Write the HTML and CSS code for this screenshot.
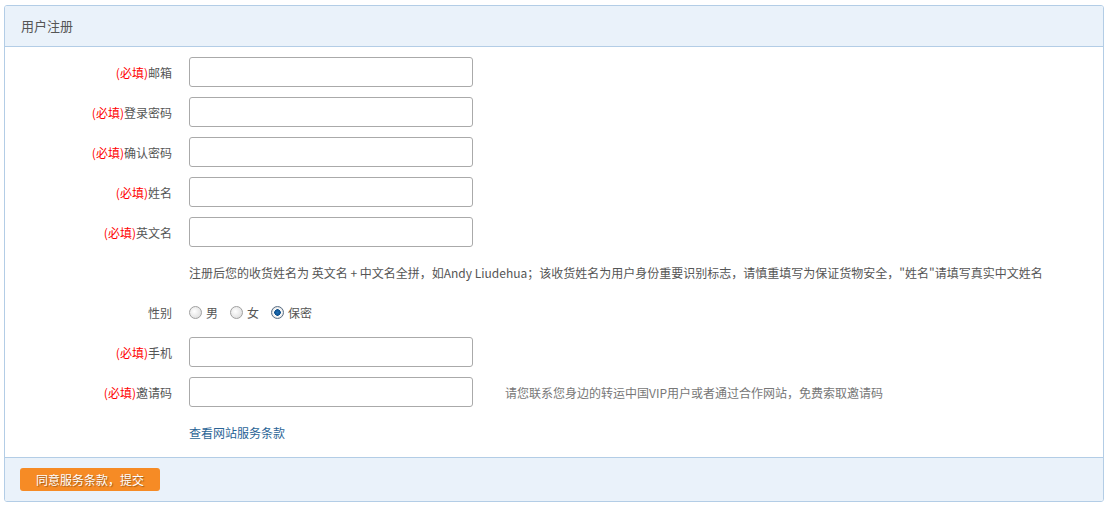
FILE: index.html
```html
<!DOCTYPE html>
<html lang="zh-CN">
<head>
    <meta charset='utf-8'>
    <title>用户注册</title>
    <link rel="stylesheet" href="styles.css">
</head>
<body>

<div class="panel">
    <div class="panel-head">用户注册</div>
    <form class="panel-body" id="reg-form">
        <div class="row">
            <label class="label"><em>(必填)</em>邮箱</label>
            <input class="text" name="email" type="text">
        </div>
        <div class="row">
            <label class="label"><em>(必填)</em>登录密码</label>
            <input class="text" name="password" type="password">
        </div>
        <div class="row">
            <label class="label"><em>(必填)</em>确认密码</label>
            <input class="text" name="password2" type="password">
        </div>
        <div class="row">
            <label class="label"><em>(必填)</em>姓名</label>
            <input class="text" name="name" type="text">
        </div>
        <div class="row">
            <label class="label"><em>(必填)</em>英文名</label>
            <input class="text" name="ename" type="text">
        </div>
        <div class="row">
            <span class="label"></span>
            <p class="note">注册后您的收货姓名为 英文名 + 中文名全拼，如Andy Liudehua；该收货姓名为用户身份重要识别标志，请慎重填写为保证货物安全，"姓名"请填写真实中文姓名</p>
        </div>
        <div class="row">
            <span class="label">性别</span>
            <div class="radios">
                <label><input type="radio" name="sex" value="1">男</label>
                <label><input type="radio" name="sex" value="2">女</label>
                <label><input type="radio" name="sex" value="0" checked>保密</label>
            </div>
        </div>
        <div class="row">
            <label class="label"><em>(必填)</em>手机</label>
            <input class="text" name="mobile" type="text">
        </div>
        <div class="row">
            <label class="label"><em>(必填)</em>邀请码</label>
            <input class="text" name="invite" type="text">
            <span class="tip">请您联系您身边的转运中国VIP用户或者通过合作网站，免费索取邀请码</span>
        </div>
        <div class="row">
            <span class="label"></span>
            <a class="terms" href="#">查看网站服务条款</a>
        </div>
    </form>
    <div class="panel-foot">
        <button class="submit" type="submit" form="reg-form">同意服务条款，提交</button>
    </div>
</div>

</body>
</html>
```

FILE: styles.css
```css
body {
    margin: 5px 5px 5px 4px;
    background: #FFFFFF;
    font-family: "Noto Sans CJK SC", "Liberation Sans", sans-serif;
    font-size: 12px;
    color: #555555;
}

.panel {
    border: 1px solid #b3cde6;
    border-radius: 3px;
    overflow: hidden;
}

.panel-head {
    height: 40px;
    line-height: 40px;
    padding-left: 16px;
    background: #eaf2fa;
    border-bottom: 1px solid #b3cde6;
    font-size: 13px;
    color: #555555;
}

.panel-body {
    margin: 0;
    padding: 10px 0 0;
}

.row {
    display: flex;
    align-items: center;
    height: 30px;
    margin-bottom: 10px;
}

.label {
    width: 167px;
    flex: none;
    text-align: right;
    padding-right: 17px;
    color: #555555;
}

.label em {
    font-style: normal;
    color: #ff0000;
}

.text {
    width: 284px;
    height: 30px;
    box-sizing: border-box;
    border: 1px solid #aaaaaa;
    border-radius: 3px;
    padding: 0 6px;
    outline: 0;
    font: inherit;
}

.note {
    margin: 0;
    color: #555555;
}

.radios {
    display: flex;
    gap: 12px;
}

.radios label {
    display: flex;
    align-items: center;
    gap: 4px;
}

.radios input {
    appearance: none;
    margin: 0;
    width: 13px;
    height: 13px;
    border-radius: 50%;
    border: 1px solid #a0a0a0;
    background: radial-gradient(circle at 40% 40%, #ffffff, #d6d6d6);
    box-sizing: border-box;
}

.radios input:checked {
    border-color: #5a6f86;
    background: radial-gradient(circle, #1d6fb8 0, #0c4f8c 3px, #ffffff 3.5px, #d9d9d9 6px);
}

.tip {
    margin-left: 32px;
    color: #777777;
}

.terms {
    color: #2a6496;
    text-decoration: none;
}

.panel-foot {
    height: 43px;
    display: flex;
    align-items: center;
    padding-left: 15px;
    background: #eaf2fa;
    border-top: 1px solid #b3cde6;
}

.submit {
    width: 140px;
    height: 23px;
    border: 0;
    border-radius: 3px;
    background: #f68b25;
    color: #FFFFFF;
    font: inherit;
    font-size: 12px;
    text-shadow: 1px 1px 1px rgba(0, 0, 0, 0.35);
    cursor: pointer;
}
```
